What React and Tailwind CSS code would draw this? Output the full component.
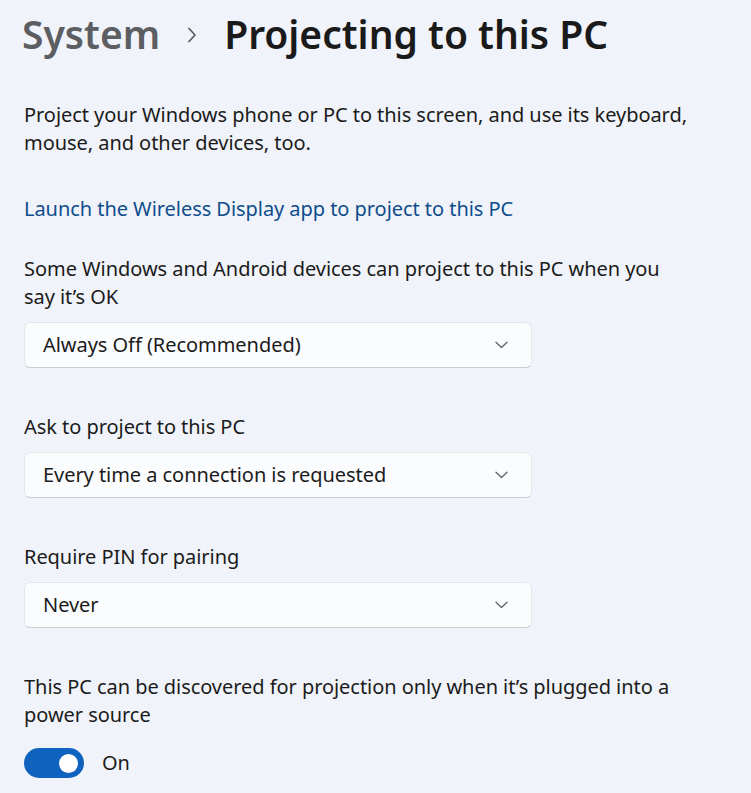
import { useState } from "react"

const Chevron = () => (
  <svg width="13" height="8" viewBox="0 0 13 8" fill="none" className="text-[#5f6368]">
    <path d="M1 1.2 6.5 6.5 12 1.2" stroke="currentColor" strokeWidth="1.3" strokeLinecap="round" strokeLinejoin="round" />
  </svg>
)

const Select = ({ value }) => (
  <button
    type="button"
    className="flex items-center justify-between w-[508px] h-[46px] pl-[18px] pr-[23px] bg-[#fbfcfe] border border-[#e3e6eb] border-b-[#c9ccd1] rounded-[6px] text-[20px] tracking-[-0.05px] text-[#1b1b1b] text-left"
  >
    <span>{value}</span>
    <Chevron />
  </button>
)

const App = () => {
  const [on, setOn] = useState(true)

  return (
    <div className="min-h-screen w-full bg-[#f0f3f9] font-['Noto_Sans',sans-serif] text-[#1b1b1b] pl-[24px] pt-[9px] overflow-hidden">
      {/* Breadcrumb */}
      <div className="flex items-center h-[50px] text-[39px] font-semibold">
        <span className="text-[#5c5e62] -ml-[2px]">System</span>
        <svg width="10" height="16" viewBox="0 0 10 16" fill="none" className="mx-[27px] mt-[2px] text-[#5c5e62]">
          <path d="M2 1.5 8 8 2 14.5" stroke="currentColor" strokeWidth="1.8" strokeLinecap="round" strokeLinejoin="round" />
        </svg>
        <span className="text-[#1a1a1a]">Projecting to this PC</span>
      </div>

      <p className="mt-[42px] text-[20px] leading-[28px] tracking-[-0.05px]">
        Project your Windows phone or PC to this screen, and use its keyboard,
        <br />
        mouse, and other devices, too.
      </p>

      <a href="#" className="block mt-[38px] text-[20px] leading-[28px] tracking-[-0.05px] text-[#0f4d8c]">
        Launch the Wireless Display app to project to this PC
      </a>

      <div className="mt-[32px] flex flex-col">
        <p className="text-[20px] leading-[28px] tracking-[-0.05px]">
          Some Windows and Android devices can project to this PC when you
          <br />
          say it’s OK
        </p>
        <div className="mt-[11px]">
          <Select value="Always Off (Recommended)" />
        </div>

        <p className="mt-[45px] text-[20px] leading-[28px] tracking-[-0.05px]">Ask to project to this PC</p>
        <div className="mt-[11px]">
          <Select value="Every time a connection is requested" />
        </div>

        <p className="mt-[45px] text-[20px] leading-[28px] tracking-[-0.05px]">Require PIN for pairing</p>
        <div className="mt-[11px]">
          <Select value="Never" />
        </div>

        <p className="mt-[45px] text-[20px] leading-[28px] tracking-[-0.05px]">
          This PC can be discovered for projection only when it’s plugged into a
          <br />
          power source
        </p>

        <div className="mt-[19px] flex items-center gap-[18px]">
          <button
            type="button"
            onClick={() => setOn((v) => !v)}
            className={`flex items-center w-[60px] h-[30px] rounded-full px-[6px] ${on ? "bg-[#0f62be] justify-end" : "bg-transparent border border-[#5f6368] justify-start"}`}
          >
            <span className={`block rounded-full ${on ? "w-[19px] h-[19px] bg-white" : "w-[14px] h-[14px] bg-[#5f6368]"}`} />
          </button>
          <span className="text-[20px] leading-[28px]">{on ? "On" : "Off"}</span>
        </div>
      </div>
    </div>
  )
}

export default App
